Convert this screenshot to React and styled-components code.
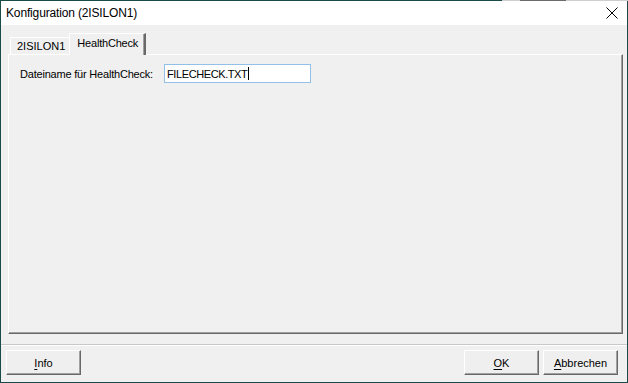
import React from 'react'
import styled, { createGlobalStyle } from 'styled-components'

const GlobalStyle = createGlobalStyle`
    html, body {
        margin: 0;
        padding: 0;
        background: #1b4b48;
    }
    * {
        box-sizing: border-box;
    }
`

const teal = '#1b4b48'
const shadow = '#696969'
const midShadow = '#a0a0a0'
const face = '#f0f0f0'

const Window = styled.div`
    width: 628px;
    height: 383px;
    display: flex;
    flex-direction: column;
    border-left: 1px solid ${teal};
    border-right: 1px solid ${teal};
    border-bottom: 1px solid ${teal};
    font-family: "Liberation Sans", Arial, sans-serif;
    color: #000;
`

const TopEdge = styled.div`
    height: 1px;
    margin: 0 -1px;
    background: linear-gradient(to right, ${teal} 502px, #cfcfcf 502px, #cfcfcf 520px, #6b6b6b 520px, #6b6b6b 566px, #cfcfcf 566px);
`

const TitleBar = styled.div`
    height: 24px;
    background: #fff;
    display: flex;
    align-items: center;
    justify-content: space-between;
    padding: 0 9px 0 5px;
`

const Title = styled.span`
    font-size: 12px;
    letter-spacing: -0.15px;
    margin-top: -1px;
`

const CloseIcon = () => (
    <svg width="12" height="12" viewBox="0 0 12 12">
        <path d="M0.5 0.5 L11.5 11.5 M11.5 0.5 L0.5 11.5" stroke="#000" strokeWidth="1" fill="none" />
    </svg>
)

const Body = styled.div`
    flex: 1;
    background: ${face};
    display: flex;
    flex-direction: column;
`

const Content = styled.div`
    flex: 1;
    display: flex;
    flex-direction: column;
    padding: 8px 4px 0 7px;
`

const TabStrip = styled.div`
    height: 21px;
    display: flex;
    align-items: flex-end;
    padding-left: 2px;
    position: relative;
    z-index: 1;
`

const Tab = styled.div`
    height: ${p => (p.$active ? 22 : 17)}px;
    margin-bottom: ${p => (p.$active ? -1 : 0)}px;
    padding: ${p => (p.$active ? '3px 6px 0 7px' : '2px 4px 0 6px')};
    background: ${face};
    border-top: 1px solid #fff;
    border-left: 1px solid #fff;
    border-right: ${p => (p.$active ? `2px solid ${shadow}` : 'none')};
    box-shadow: ${p => (p.$active ? `inset -1px 0 0 ${midShadow}` : 'none')};
    font-size: 11px;
    letter-spacing: ${p => (p.$active ? '-0.2px' : '0')};
    white-space: nowrap;
`

const Panel = styled.div`
    flex: 1;
    border-top: 1px solid #fff;
    border-left: 1px solid #fff;
    border-right: 1px solid ${shadow};
    border-bottom: 1px solid ${shadow};
    box-shadow: inset -1px -1px 0 ${midShadow};
    padding: 9px 0 0 11px;
`

const FieldRow = styled.div`
    display: flex;
    align-items: center;
    height: 19px;
`

const Label = styled.span`
    font-size: 11px;
    letter-spacing: -0.2px;
    width: 144px;
`

const TextBox = styled.div`
    width: 147px;
    height: 19px;
    background: #fff;
    border: 1px solid #92c0e8;
    display: flex;
    align-items: center;
    padding-left: 2px;
    font-size: 11px;
    letter-spacing: -0.4px;
`

const Caret = styled.span`
    display: inline-block;
    width: 1px;
    height: 13px;
    background: #000;
    margin-left: 1px;
`

const Separator = styled.div`
    height: 2px;
    margin-top: 10px;
    border-top: 1px solid #c8c8c8;
    border-bottom: 1px solid #fff;
`

const Footer = styled.div`
    display: flex;
    align-items: center;
    padding: 4px 9px 7px 5px;
    gap: 4px;
`

const Spacer = styled.div`
    flex: 1;
`

const Button = styled.button`
    width: 75px;
    height: 25px;
    padding: 0;
    background: #efefef;
    border-top: 1px solid #fff;
    border-left: 1px solid #fff;
    border-right: 1px solid ${shadow};
    border-bottom: 1px solid ${shadow};
    box-shadow: inset -1px -1px 0 ${midShadow};
    font-family: "Liberation Sans", Arial, sans-serif;
    font-size: 11px;
    color: #000;
    text-align: center;

    u {
        text-decoration: underline;
        text-underline-offset: 2px;
    }
`

const App = () => {
    return (
        <>
            <GlobalStyle />
            <Window>
                <TopEdge />
                <TitleBar>
                    <Title>Konfiguration (2ISILON1)</Title>
                    <CloseIcon />
                </TitleBar>
                <Body>
                    <Content>
                        <TabStrip>
                            <Tab>2ISILON1</Tab>
                            <Tab $active>HealthCheck</Tab>
                        </TabStrip>
                        <Panel>
                            <FieldRow>
                                <Label>Dateiname für HealthCheck:</Label>
                                <TextBox>
                                    FILECHECK.TXT<Caret />
                                </TextBox>
                            </FieldRow>
                        </Panel>
                    </Content>
                    <Separator />
                    <Footer>
                        <Button><u>I</u>nfo</Button>
                        <Spacer />
                        <Button><u>O</u>K</Button>
                        <Button><u>A</u>bbrechen</Button>
                    </Footer>
                </Body>
            </Window>
        </>
    )
}

export default App
